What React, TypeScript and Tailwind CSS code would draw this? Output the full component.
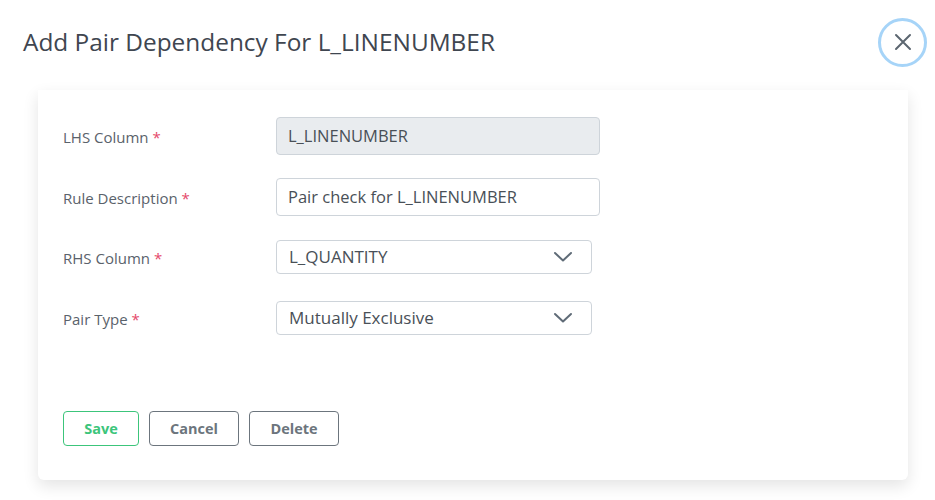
import React from "react";

const ff = { fontFamily: '"Open Sans", "Noto Sans", sans-serif' };

function Chevron() {
  return (
    <svg width="20" height="12" viewBox="0 0 20 12" fill="none">
      <path d="M2 2 L10 9.5 L18 2" stroke="#5f6b77" strokeWidth="2" strokeLinecap="round" strokeLinejoin="round" />
    </svg>
  );
}

function Label({ text }: { text: string }) {
  return (
    <div className="w-[213px] pt-[3px] text-[15px] text-[#5a626b]">
      {text} <span className="text-[#e5486a]">*</span>
    </div>
  );
}

export default function App() {
  return (
    <div className="w-[935px] h-[500px] bg-white overflow-hidden" style={ff}>
      <div className="flex items-center justify-between h-[84px] pl-[23px] pr-[8px]">
        <h1 className="text-[24.4px] text-[#3f4650] font-normal">Add Pair Dependency For L_LINENUMBER</h1>
        <button className="w-[49px] h-[49px] rounded-full border-[3px] border-[#a6d4f8] flex items-center justify-center">
          <svg width="18" height="18" viewBox="0 0 18 18" fill="none">
            <path d="M2 2 L16 16 M16 2 L2 16" stroke="#5c6670" strokeWidth="2" strokeLinecap="round" />
          </svg>
        </button>
      </div>
      <div className="ml-[38px] w-[870px] h-[390px] mt-[6px] bg-white rounded-b-[6px] shadow-[0_6px_16px_rgba(0,0,0,0.11)] pl-[25px] pt-[27px]">
        <div className="flex items-center h-[38px]">
          <Label text="LHS Column" />
          <div className="w-[324px] h-[38px] rounded-[4px] border border-[#ced4da] bg-[#e9ecef] px-[11px] flex items-center text-[16.5px] text-[#495057]">L_LINENUMBER</div>
        </div>
        <div className="flex items-center h-[38px] mt-[23px]">
          <Label text="Rule Description" />
          <div className="w-[324px] h-[38px] rounded-[4px] border border-[#ced4da] bg-white px-[11px] flex items-center text-[16.5px] text-[#495057]">Pair check for L_LINENUMBER</div>
        </div>
        <div className="flex items-center h-[34px] mt-[24px]">
          <Label text="RHS Column" />
          <div className="w-[316px] h-[34px] rounded-[4px] border border-[#ced4da] bg-white pl-[12px] pr-[18px] flex items-center justify-between text-[17px] text-[#495057]">
            <span>L_QUANTITY</span>
            <Chevron />
          </div>
        </div>
        <div className="flex items-center h-[34px] mt-[27px]">
          <Label text="Pair Type" />
          <div className="w-[316px] h-[34px] rounded-[4px] border border-[#ced4da] bg-white pl-[12px] pr-[18px] flex items-center justify-between text-[17px] text-[#495057]">
            <span>Mutually Exclusive</span>
            <Chevron />
          </div>
        </div>
        <div className="flex gap-[10px] mt-[76px]">
          <button className="w-[76px] h-[35px] rounded-[4px] border border-[#3cc57b] text-[#3cc57b] font-bold text-[14.5px]">Save</button>
          <button className="w-[90px] h-[35px] rounded-[4px] border border-[#6c757d] text-[#6c757d] font-bold text-[14.5px]">Cancel</button>
          <button className="w-[90px] h-[35px] rounded-[4px] border border-[#6c757d] text-[#6c757d] font-bold text-[14.5px]">Delete</button>
        </div>
      </div>
    </div>
  );
}
